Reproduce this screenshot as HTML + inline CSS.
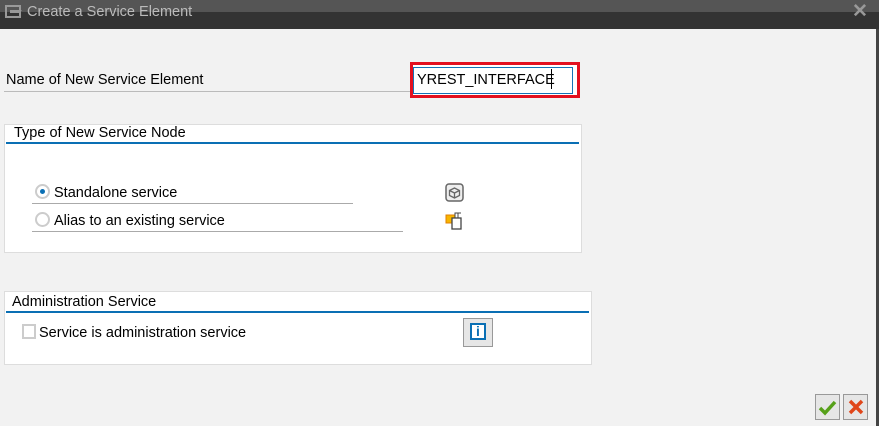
<!DOCTYPE html>
<html><head><style>
*{margin:0;padding:0;box-sizing:border-box}
body{width:879px;height:426px;background:#f2f2f2;font-family:"Liberation Sans",Arial,sans-serif;font-size:14px;color:#000;position:relative;overflow:hidden}
.a{position:absolute}
.t{position:absolute;white-space:nowrap;font-size:14.5px;line-height:17px}
</style></head><body>
<div class="a" style="left:0;top:0;width:879px;height:12px;background:#555"></div>
<div class="a" style="left:0;top:12px;width:879px;height:17px;background:#333"></div>
<svg class="a" style="left:5px;top:5px" width="18" height="14"><rect x="1" y="1" width="14" height="11" fill="none" stroke="#999" stroke-width="2"/><path d="M5 5h12l-3 3H5z" fill="#999"/></svg>
<div class="t" style="left:27px;top:4px;color:#bbb;font-size:14.5px">Create a Service Element</div>
<div class="t" style="left:852px;top:3px;color:#999;font-size:19px;font-weight:bold">✕</div>
<div class="a" style="left:876px;top:29px;width:3px;height:397px;background:#444"></div>

<div class="t" style="left:6px;top:72px">Name of New Service Element</div>
<div class="a" style="left:4px;top:91px;width:408px;height:1px;background:#bbb"></div>
<div class="a" style="left:410px;top:62px;width:170px;height:36px;border:3px solid #e3101f;background:#fff"></div>
<div class="a" style="left:413px;top:67px;width:160px;height:27px;border:1px solid #1573b6;background:#fff"></div>
<div class="t" style="left:417px;top:72px">YREST_INTERFACE</div>
<div class="a" style="left:551px;top:69px;width:1px;height:20px;background:#000"></div>

<div class="a" style="left:4px;top:124px;width:578px;height:129px;background:#fff;border:1px solid #ddd"></div>
<div class="t" style="left:14px;top:125px">Type of New Service Node</div>
<div class="a" style="left:6px;top:142px;width:573px;height:2px;background:#0a6fb4"></div>
<div class="a" style="left:35px;top:184px;width:15px;height:15px;border-radius:50%;border:2px solid #ccc;background:#fff"></div>
<div class="a" style="left:40px;top:189px;width:5px;height:5px;border-radius:50%;background:#0a6fb4"></div>
<div class="t" style="left:54px;top:185px">Standalone service</div>
<div class="a" style="left:32px;top:203px;width:321px;height:1px;background:#aaa"></div>
<div class="a" style="left:35px;top:212px;width:15px;height:15px;border-radius:50%;border:2px solid #ccc;background:#fff"></div>
<div class="t" style="left:54px;top:213px">Alias to an existing service</div>
<div class="a" style="left:32px;top:231px;width:371px;height:1px;background:#aaa"></div>
<svg class="a" style="left:445px;top:183px" width="20" height="20"><rect x="1" y="1" width="17" height="17" rx="3" fill="#eee" stroke="#666" stroke-width="1.5"/><path d="M4.5 7.5l5-2.5 5 2.5v5l-5 2.5-5-2.5zM4.5 7.5l5 2.5 5-2.5M9.5 10v5" fill="none" stroke="#666" stroke-width="1.3"/></svg>
<svg class="a" style="left:445px;top:210px" width="20" height="20"><rect x="1" y="5" width="9" height="8" fill="#f7b500" stroke="#e08000"/><rect x="7" y="8" width="9" height="11" fill="#fff" stroke="#444" stroke-width="1.3"/><path d="M10 8V3h3v5M13 3h3" fill="none" stroke="#444"/></svg>

<div class="a" style="left:4px;top:291px;width:588px;height:74px;background:#fff;border:1px solid #ddd"></div>
<div class="t" style="left:12px;top:294px">Administration Service</div>
<div class="a" style="left:6px;top:311px;width:583px;height:2px;background:#0a6fb4"></div>
<div class="a" style="left:22px;top:324px;width:14px;height:15px;border:2px solid #ccc;background:#fff"></div>
<div class="t" style="left:39px;top:325px">Service is administration service</div>
<div class="a" style="left:463px;top:318px;width:30px;height:29px;border:1px solid #999;background:#e6e6e6"></div>
<div class="a" style="left:470px;top:323px;width:16px;height:17px;border:2px solid #0a6fb4;background:#fff;color:#0a6fb4;font-weight:bold;font-size:14px;line-height:13px;text-align:center">i</div>

<div class="a" style="left:815px;top:394px;width:25px;height:26px;border:1px solid #999;background:#e6e6e6"></div>
<svg class="a" style="left:818px;top:398px" width="20" height="18"><path d="M2 10l5 5 10-11" fill="none" stroke="#56a019" stroke-width="3.5"/></svg>
<div class="a" style="left:843px;top:394px;width:25px;height:26px;border:1px solid #999;background:#e6e6e6"></div>
<svg class="a" style="left:846px;top:398px" width="20" height="18"><path d="M4 3l12 12M16 3L4 15" stroke="#e0461a" stroke-width="3.5"/></svg>
</body></html>
